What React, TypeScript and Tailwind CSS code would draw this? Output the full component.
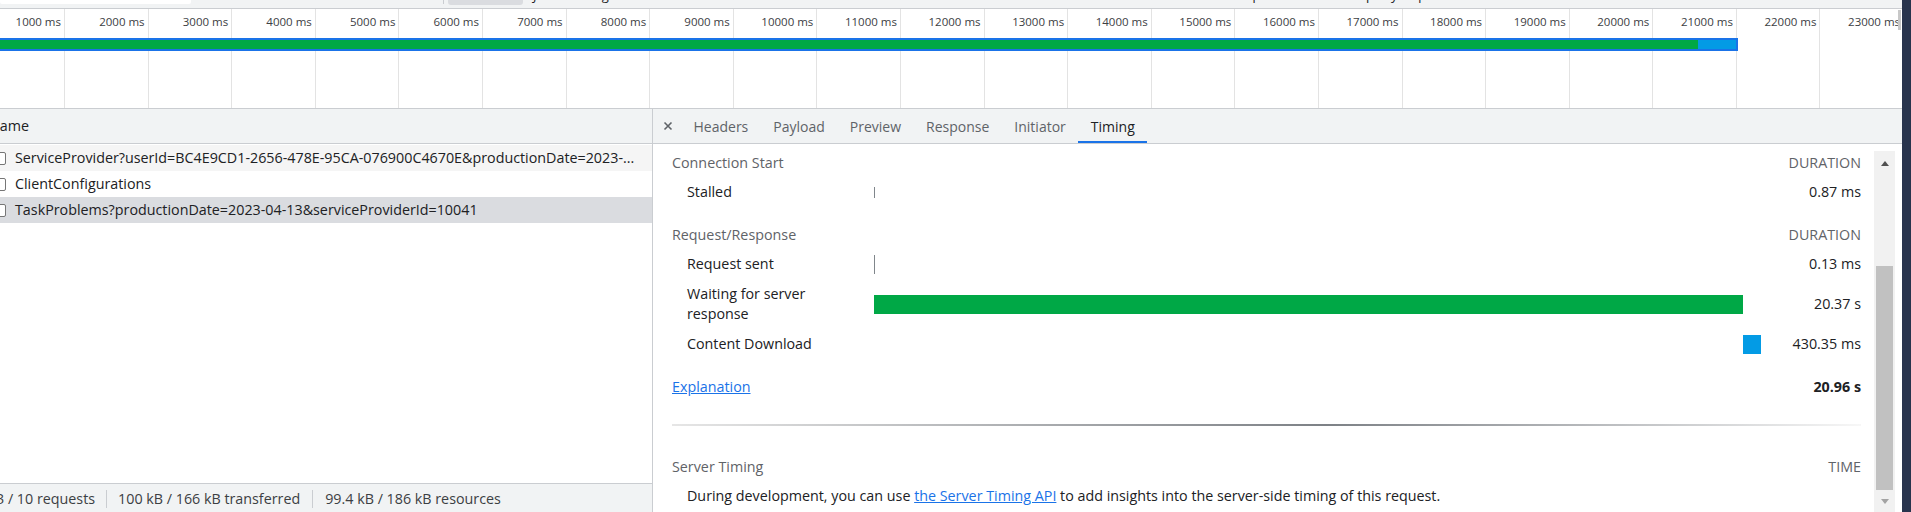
import React from "react";

const ticks = Array.from({ length: 23 }, (_, i) => `${(i + 1) * 1000} ms`);

const requests = [
  {
    name: "ServiceProvider?userId=BC4E9CD1-2656-478E-95CA-076900C4670E&productionDate=2023-...",
    bg: "bg-[#f5f5f5]",
  },
  { name: "ClientConfigurations", bg: "bg-white" },
  {
    name: "TaskProblems?productionDate=2023-04-13&serviceProviderId=10041",
    bg: "bg-[#dadce0]",
  },
];

const tabs = ["Headers", "Payload", "Preview", "Response", "Initiator", "Timing"];

function TopStrip() {
  return (
    <div className="flex h-[9px] flex-none overflow-hidden border-b border-[#cacdd1] bg-[#f1f3f4] text-[13px] leading-[16px] text-[#202124]">
      <div className="h-[4px] w-[191px] flex-none rounded-b-[2px] bg-white" />
      <div className="ml-[252px] h-[4px] w-px flex-none bg-[#cacdd1]" />
      <div className="ml-[4px] flex h-[5px] w-[75px] flex-none justify-center overflow-hidden rounded-b-[3px] bg-[#dadce0]">
        <span className="-mt-[13px]">Fetch/XHR</span>
      </div>
      <div className="flex w-[661px] flex-none gap-[10px] pl-[10px]">
        <span className="-mt-[13px]">JS</span>
        <span className="-mt-[13px]">CSS</span>
        <span className="-mt-[13px]">Img</span>
      </div>
      <span className="-mt-[13px] w-[157px] flex-none">Blocked requests</span>
      <span className="-mt-[13px] flex-none">3rd-party requests</span>
    </div>
  );
}

function Overview() {
  return (
    <div className="relative h-[100px] flex-none overflow-hidden border-b border-[#cacdd1] bg-white">
      <div className="flex h-full">
        {ticks.map((t, i) => (
          <div
            key={t}
            className={`${i === 0 ? "w-[65px]" : "w-[83.6px]"} h-full flex-none whitespace-nowrap border-r border-[#e3e3e3] pr-[3px] pt-[5px] text-right text-[11.5px] leading-[16px] text-[#3c4043]`}
          >
            {t}
          </div>
        ))}
      </div>
      <div className="absolute left-[-10px] top-[29px] flex h-[13px] w-[1748px] border-2 border-[#1a73e8] bg-[#00a846]">
        <div className="flex-1" />
        <div className="w-[38px] bg-[#039be5]" />
      </div>
      <div className="absolute right-[1px] top-[1px] h-[20px] w-[3px] bg-[#c8c8c8]" />
    </div>
  );
}

function RequestList() {
  return (
    <div className="flex w-[653px] flex-none flex-col overflow-hidden border-r border-[#cacdd1] text-[14.3px] text-[#202124]">
      <div className="flex h-[35px] flex-none items-center border-b border-[#cacdd1] bg-[#f1f3f4] whitespace-nowrap">
        <span className="-ml-[11px]">Name</span>
      </div>
      <div className="mt-[1px]">
        {requests.map((r) => (
          <div key={r.name} className={`flex h-[26px] items-center whitespace-nowrap ${r.bg}`}>
            <div className="-ml-[7px] mr-[9px] h-[13px] w-[13px] flex-none rounded-[2px] border border-[#767676] bg-white" />
            <span>{r.name}</span>
          </div>
        ))}
      </div>
      <div className="flex-1" />
      <div className="flex h-[29px] flex-none items-center whitespace-nowrap border-t border-[#cacdd1] bg-[#f1f3f4] pt-[2px] text-[#3c4043]">
        <span className="-ml-[4px]">3 / 10 requests</span>
        <div className="mx-[11px] h-[18px] w-px bg-[#cacdd1]" />
        <span>100 kB / 166 kB transferred</span>
        <div className="mx-[12px] h-[18px] w-px bg-[#cacdd1]" />
        <span>99.4 kB / 186 kB resources</span>
      </div>
    </div>
  );
}

function TabBar() {
  return (
    <div className="flex h-[35px] flex-none items-stretch border-b border-[#cacdd1] bg-[#f1f3f4] text-[14px]">
      <div className="flex w-[28px] flex-none items-center justify-center pl-[2px]">
        <svg width="10" height="10" viewBox="0 0 10 10">
          <path d="M1.5 1.5l7 7M8.5 1.5l-7 7" stroke="#5f6368" strokeWidth="1.6" />
        </svg>
      </div>
      {tabs.map((t) => (
        <div
          key={t}
          className={`relative flex items-center px-[12.5px] ${t === "Timing" ? "text-[#202124]" : "text-[#5f6368]"}`}
        >
          {t}
          {t === "Timing" && <div className="absolute bottom-0 left-0 right-0 h-[2px] bg-[#1a73e8]" />}
        </div>
      ))}
    </div>
  );
}

function Tick({ h }: { h: string }) {
  return <div className={`${h} w-px bg-[#80868b]`} />;
}

function TimingTable() {
  return (
    <div className="min-w-0 flex-1 overflow-hidden whitespace-nowrap pl-[19px] pr-[13px] pt-[4px] text-[14.3px] text-[#202124]">
      <div className="flex h-[29px] items-center justify-between text-[#5f6368]">
        <span>Connection Start</span>
        <span>DURATION</span>
      </div>
      <div className="flex h-[30px] items-center">
        <span className="w-[202px] flex-none pl-[15px]">Stalled</span>
        <div className="w-[887px] flex-none">
          <Tick h="h-[11px]" />
        </div>
        <span className="flex-1 text-right">0.87 ms</span>
      </div>

      <div className="mt-[13px] flex h-[29px] items-center justify-between text-[#5f6368]">
        <span>Request/Response</span>
        <span>DURATION</span>
      </div>
      <div className="flex h-[30px] items-center">
        <span className="w-[202px] flex-none pl-[15px]">Request sent</span>
        <div className="w-[887px] flex-none">
          <Tick h="h-[19px]" />
        </div>
        <span className="flex-1 text-right">0.13 ms</span>
      </div>
      <div className="flex h-[50px] items-center">
        <span className="w-[202px] flex-none pl-[15px] leading-[20px]">
          Waiting for server
          <br />
          response
        </span>
        <div className="w-[887px] flex-none">
          <div className="h-[19px] w-[869px] bg-[#00a846]" />
        </div>
        <span className="flex-1 text-right">20.37 s</span>
      </div>
      <div className="flex h-[30px] items-center">
        <span className="w-[202px] flex-none pl-[15px]">Content Download</span>
        <div className="flex w-[887px] flex-none">
          <div className="ml-[869px] h-[19px] w-[18px] bg-[#039be5]" />
        </div>
        <span className="flex-1 text-right">430.35 ms</span>
      </div>

      <div className="mt-[13px] flex h-[29px] items-center justify-between">
        <a className="text-[#1a73e8] underline">Explanation</a>
        <span className="font-bold">20.96 s</span>
      </div>

      <div className="mt-[23px] h-[2px] bg-linear-to-r from-[#e6e6e6] via-[#7d8186] via-55% to-[#f7f7f7]" />

      <div className="mt-[26px] flex h-[29px] items-center justify-between text-[#5f6368]">
        <span>Server Timing</span>
        <span>TIME</span>
      </div>
      <div className="flex h-[30px] items-center pl-[15px]">
        <span>
          During development, you can use{" "}
          <a className="text-[#1a73e8] underline">the Server Timing API</a> to add insights into the
          server-side timing of this request.
        </span>
      </div>
    </div>
  );
}

function Scrollbar() {
  return (
    <div className="mt-[7px] flex w-[21px] flex-none flex-col bg-[#f1f1f1]">
      <div className="flex h-[24px] flex-none items-center justify-center">
        <div className="h-0 w-0 border-x-[4.5px] border-b-[5px] border-x-transparent border-b-[#505050]" />
      </div>
      <div className="h-[91px] flex-none" />
      <div className="mx-[2px] h-[224px] flex-none bg-[#c1c1c1]" />
      <div className="flex flex-1 items-center justify-center">
        <div className="h-0 w-0 border-x-[4.5px] border-t-[5px] border-x-transparent border-t-[#a3a3a3]" />
      </div>
    </div>
  );
}

export default function App() {
  return (
    <div className="flex h-[512px] w-[1911px] overflow-hidden bg-white font-['Open_Sans',sans-serif]">
      <div className="flex min-w-0 flex-1 flex-col">
        <TopStrip />
        <Overview />
        <div className="flex min-h-0 flex-1">
          <RequestList />
          <div className="flex min-w-0 flex-1 flex-col">
            <TabBar />
            <div className="flex min-h-0 flex-1">
              <TimingTable />
              <Scrollbar />
              <div className="w-[7px] flex-none" />
            </div>
          </div>
        </div>
      </div>
      <div className="w-[9px] flex-none bg-[#28344d]" />
    </div>
  );
}
